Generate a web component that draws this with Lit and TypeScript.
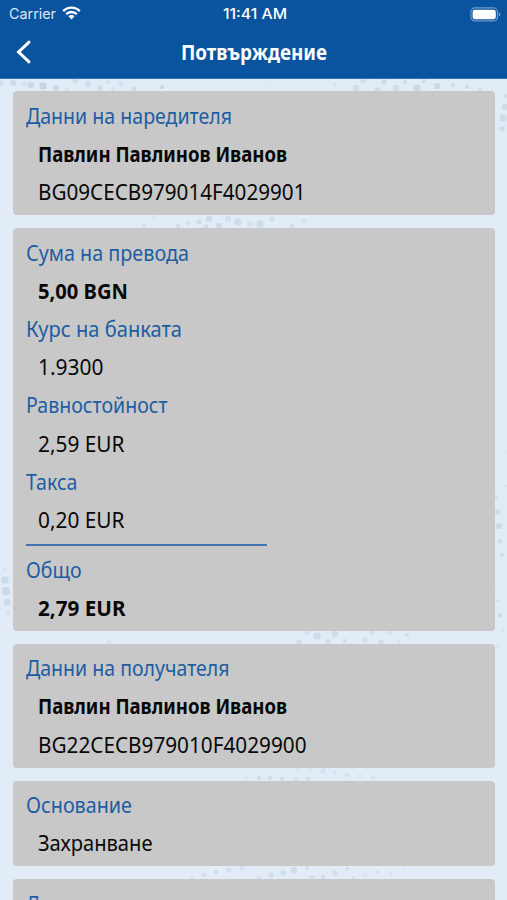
import { LitElement, html, svg, css } from "lit";
import { customElement, property } from "lit/decorators.js";
import { styleMap } from "lit/directives/style-map.js";

type Kind = "label" | "value" | "strong";
interface Line { kind: Kind; text: string; width: number; }
type Row = Line | "rule";

const label = (text: string, width: number): Line => ({ kind: "label", text, width });
const value = (text: string, width: number): Line => ({ kind: "value", text, width });
const strong = (text: string, width: number): Line => ({ kind: "strong", text, width });

const CARDS: Row[][] = [
  [
    label("Данни на наредителя", 206),
    strong("Павлин Павлинов Иванов", 249),
    value("BG09CECB979014F4029901", 267.5),
  ],
  [
    label("Сума на превода", 163),
    strong("5,00 BGN", 90),
    label("Курс на банката", 156),
    value("1.9300", 65.5),
    label("Равностойност", 141.5),
    value("2,59 EUR", 86.5),
    label("Такса", 51.5),
    value("0,20 EUR", 86.5),
    "rule",
    label("Общо", 55.5),
    strong("2,79 EUR", 87.5),
  ],
  [
    label("Данни на получателя", 203.5),
    strong("Павлин Павлинов Иванов", 249),
    value("BG22CECB979010F4029900", 268.5),
  ],
  [label("Основание", 106), value("Захранване", 114.5)],
  [label("Дата", 44)],
];

/* x, y, size, opacity of each speck of the background texture */
const SPECKS: number[][] = [
  [1, 83, 5, .5], [13, 83, 6, .6], [25, 84, 5, .4], [31, 85, 6, .7], [43, 86, 7, .8], [56, 88, 6, .7],
  [75, 81, 5, .6], [88, 84, 6, .5], [100, 88, 5, .6], [113, 89, 4, .4], [67, 90, 4, .4],
  [108, 82, 4, .4], [121, 84, 5, .4], [134, 89, 5, .5], [162, 87, 4, .7], [270, 86, 2, .5], [335, 85, 3, .4],
  [356, 88, 6, .6], [363, 81, 5, .5], [377, 90, 5, .6], [384, 82, 5, .6], [396, 88, 6, .6], [405, 82, 4, .6],
  [417, 88, 7, .7], [424, 81, 4, .6], [437, 86, 6, .7], [453, 85, 4, .5], [467, 87, 4, .6], [480, 90, 4, .6],
  [505, 96, 4, .5], [505, 107, 6, .6], [503, 118, 7, .6], [502, 129, 5, .6],
  [144, 225, 4, .5], [154, 217, 4, .3], [178, 226, 4, .5], [188, 223, 4, .5], [199, 222, 5, .6], [209, 219, 6, .6],
  [206, 227, 5, .6], [219, 226, 6, .6], [228, 219, 6, .5], [238, 222, 7, .6], [250, 224, 6, .4], [260, 224, 7, .6],
  [272, 219, 5, .5], [292, 226, 4, .5], [304, 221, 4, .5],
  [496, 497, 4, .5], [498, 512, 6, .5], [499, 526, 6, .6], [500, 541, 5, .5], [502, 555, 4, .5], [495, 587, 3, .4],
  [498, 601, 3, .5], [500, 615, 4, .6], [503, 630, 3, .4], [498, 647, 3, .4], [501, 660, 2, .4],
  [5, 569, 3, .4], [5, 580, 7, .7], [6, 591, 8, .7], [7, 602, 7, .6], [8, 613, 4, .4], [505, 452, 3, .3], [506, 486, 3, .3],
  [307, 633, 4, .5], [317, 636, 7, .6], [335, 634, 6, .6], [299, 642, 5, .6], [328, 642, 5, .5], [345, 641, 4, .5],
  [365, 640, 5, .5], [372, 633, 4, .5], [381, 642, 5, .6], [390, 633, 4, .4], [407, 635, 4, .5], [399, 642, 3, .4],
  [109, 642, 3, .4], [127, 634, 2, .3],
  [259, 778, 4, .5], [270, 778, 4, .5], [282, 779, 4, .5], [296, 779, 4, .5], [308, 779, 4, .5], [247, 777, 3, .3],
  [298, 770, 3, .4], [310, 770, 3, .4], [323, 771, 5, .4], [335, 773, 3, .4], [347, 775, 4, .5], [360, 776, 3, .5], [373, 778, 3, .4],
  [192, 878, 3, .5], [204, 875, 4, .5], [216, 872, 4, .5], [229, 870, 5, .5], [242, 868, 5, .4],
  [259, 878, 4, .5], [271, 875, 5, .6], [283, 873, 5, .6], [294, 870, 6, .6], [307, 868, 4, .5],
  [312, 878, 5, .5], [323, 877, 4, .5], [335, 873, 5, .6], [347, 869, 4, .4], [353, 878, 3, .4], [365, 875, 3, .4],
  [377, 872, 3, .5], [391, 874, 3, .4], [404, 869, 3, .3],
];

/** One line of text, condensed horizontally to a given width. */
@customElement("fit-text")
class FitText extends LitElement {
  @property() text = "";
  @property({ type: Number }) width = 0;
  @property({ attribute: false }) ratio = 1;

  static styles = css`
    :host { display: inline-block; white-space: pre; }
    .box { display: block; }
    .text { display: inline-block; transform-origin: 0 50%; }
  `;

  firstUpdated() {
    const el = this.renderRoot.querySelector(".text") as HTMLElement;
    this.ratio = this.width / el.getBoundingClientRect().width;
  }

  render() {
    return html`<span class="box" style=${styleMap({ width: `${this.width}px` })}><span class="text"
      style=${styleMap({ transform: `scaleX(${this.ratio})` })}>${this.text}</span></span>`;
  }
}

@customElement("app-root")
class AppRoot extends LitElement {
  static styles = css`
    :host {
      display: flex;
      flex-direction: column;
      position: relative;
      height: 900px;
      overflow: hidden;
      background: #e1ecf7;
      font-family: "Noto Sans", "Open Sans", sans-serif;
      color: #080808;
    }
    .texture { position: absolute; inset: 0; width: 507px; height: 900px; }
    .top {
      position: relative;
      flex: none;
      box-sizing: border-box;
      height: 79px;
      background: #0a539e;
      border-bottom: 1px solid #2e76bb;
      color: #fff;
    }
    .status {
      display: grid;
      grid-template-columns: 1fr auto 1fr;
      align-items: center;
      height: 27px;
      padding: 0 6px 0 9px;
      font: 14.6px/27px Inter, sans-serif;
    }
    .carrier { display: flex; align-items: center; gap: 6px; color: #dce8f5; }
    .carrier svg { margin-bottom: 2px; }
    .carrier fit-text, .time { padding-top: 1px; }
    .time { font-weight: 500; }
    .battery { justify-self: end; }
    .nav {
      display: grid;
      grid-template-columns: 60px 1fr 60px;
      align-items: center;
      height: 50px;
    }
    .back { margin-left: 15px; }
    .title { justify-self: center; font-size: 20.5px; font-weight: 700; line-height: 50px; }
    svg { display: block; }
    .cards {
      position: relative;
      display: flex;
      flex-direction: column;
      gap: 12.9px;
      padding: 12.4px 12.5px 0 13px;
    }
    .card {
      flex: none;
      padding: 5.5px 12.5px 3.9px;
      border-radius: 4px;
      background: #c8c8c8;
    }
    .row { height: 38.2px; font-size: 21px; line-height: 38.2px; }
    .label { color: #1c5da3; }
    .value, .strong { padding-left: 12px; }
    .strong { font-weight: 700; }
    .rule { width: 241px; height: 2px; margin: 4.6px 0 4.8px; background: #3f74ae; }
  `;

  private row(r: Row) {
    return r === "rule"
      ? html`<div class="rule"></div>`
      : html`<div class="row ${r.kind}"><fit-text .text=${r.text} .width=${r.width}></fit-text></div>`;
  }

  render() {
    return html`
      <svg class="texture" viewBox="0 0 507 900">
        ${SPECKS.map(([x, y, s, o]) => svg`<rect x=${x - s / 2} y=${y - s / 2} width=${s} height=${s}
          rx=${s / 3} fill="#bccbda" opacity=${o * 0.85}></rect>`)}
      </svg>
      <header class="top">
        <div class="status">
          <div class="carrier">
            <fit-text .text=${"Carrier"} .width=${47}></fit-text>
            <svg width="19" height="14" viewBox="0 0 19 14">
              <path d="M1.2 5.1a11.6 11.6 0 0 1 16.6 0M4.2 8.2a7.4 7.4 0 0 1 10.6 0" fill="none" stroke="#fff" stroke-width="2.4"></path>
              <path d="M6.4 10.3a4.4 4.4 0 0 1 6.2 0L9.5 13.5z" fill="#fff"></path>
            </svg>
          </div>
          <div class="time"><fit-text .text=${"11:41 AM"} .width=${64}></fit-text></div>
          <svg class="battery" width="31" height="15" viewBox="0 0 31 15">
            <rect x=".9" y=".9" width="26.6" height="13" rx="4" fill="none" stroke="#6c9acb" stroke-width="1.2"></rect>
            <rect x="2.6" y="2.7" width="23.2" height="9.5" rx="2.3" fill="#fff"></rect>
            <path d="M28.8 5.2q1.7 .7 1.7 2.2t-1.7 2.2z" fill="#6c9acb"></path>
          </svg>
        </div>
        <div class="nav">
          <svg class="back" width="18" height="24" viewBox="0 0 18 24">
            <path d="M14 2.2 3.6 12 14 21.8" fill="none" stroke="#fff" stroke-width="3" stroke-linecap="round" stroke-linejoin="miter"></path>
          </svg>
          <div class="title"><fit-text .text=${"Потвърждение"} .width=${146}></fit-text></div>
        </div>
      </header>
      <main class="cards">
        ${CARDS.map((rows) => html`<section class="card">${rows.map((r) => this.row(r))}</section>`)}
      </main>
    `;
  }
}
